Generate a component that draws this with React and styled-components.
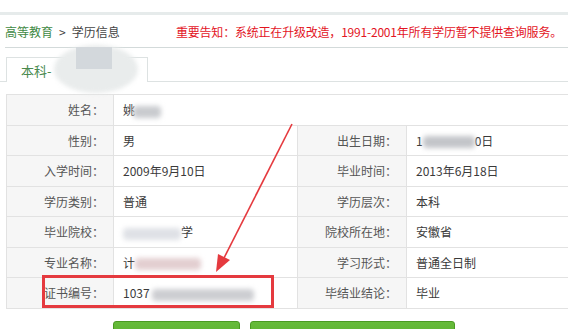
import React from 'react'
import styled, { createGlobalStyle } from 'styled-components'

const GlobalStyle = createGlobalStyle`
  html, body {
    margin: 0;
    padding: 0;
    background: #fff;
    overflow: hidden;
  }
  body {
    font-family: 'Noto Sans CJK SC', 'Noto Sans', sans-serif;
    font-size: 12px;
    color: #333;
  }
`

const Page = styled.div`
  position: relative;
  width: 568px;
  height: 329px;
  overflow: hidden;
`

const TopStrip = styled.div`
  height: 12px;
  border-bottom: 3px solid #e6ebeb;
`

const Crumbs = styled.div`
  display: flex;
  align-items: center;
  justify-content: space-between;
  height: 32px;
  margin-left: 5px;
  padding-right: 6px;
  border-bottom: 1px solid #d3dada;
  white-space: nowrap;
`

const Trail = styled.div`
  display: flex;
  gap: 6px;
  color: #444;
  font-size: 12px;
  a {
    color: #3f8a44;
    text-decoration: none;
  }
`

const Notice = styled.div`
  color: #e3151f;
  font-size: 12px;
  letter-spacing: -0.2px;
`

const TabBar = styled.div`
  display: flex;
  margin-top: 9px;
  padding-left: 6px;
  border-bottom: 1px solid #dde2e2;
`

const Tab = styled.div`
  width: 126px;
  height: 24px;
  padding-left: 14px;
  display: flex;
  align-items: center;
  color: #4a8a4e;
  font-size: 13px;
  border: 1px solid #dde2e2;
  border-bottom: none;
  background: #fff;
  margin-bottom: -1px;
`

const TableWrap = styled.div`
  position: relative;
  margin: 12px 0 0 6px;
`

const Table = styled.table`
  border-collapse: collapse;
  width: 600px;
  table-layout: fixed;
  td {
    border: 1px solid #e2e2e2;
    height: 29.5px;
    padding: 0;
    vertical-align: middle;
    white-space: nowrap;
  }
`

const Label = styled.td`
  background: #f6f6f6;
  text-align: right;
  padding-right: 9px !important;
  color: #555;
`

const Value = styled.td`
  background: #fff;
  padding-left: 9px !important;
  color: #3a3a3a;
`

const Blur = styled.span`
  display: inline-block;
  vertical-align: middle;
  width: ${p => p.w}px;
  height: ${p => p.h || 12}px;
  margin-left: ${p => p.ml || 0}px;
  background: ${p => p.c || '#c9cbcf'};
  border-radius: 4px;
  filter: blur(2.5px);
`

const Ellipse = styled.div`
  position: absolute;
  left: ${p => p.x}px;
  top: ${p => p.y}px;
  width: ${p => p.w}px;
  height: ${p => p.h}px;
  border-radius: 50%;
  background: ${p => p.c};
  filter: blur(${p => p.b || 2}px);
`

const Square = styled.div`
  position: absolute;
  left: 76px;
  top: 47px;
  width: 36px;
  height: 22px;
  background: #d3d8dc;
  filter: blur(0.5px);
`

const RedBox = styled.div`
  position: absolute;
  left: 36px;
  top: 181px;
  width: 226px;
  height: 27px;
  border: 3px solid #e53a3f;
`

const Arrow = styled.svg`
  position: absolute;
  left: 0;
  top: 0;
  pointer-events: none;
`

const Actions = styled.div`
  display: flex;
  align-items: flex-start;
  margin-top: 12px;
  padding-left: 113px;
  gap: 10px;
`

const GreenButton = styled.button`
  flex-shrink: 0;
  width: ${p => p.w}px;
  height: 30px;
  border: 1px solid #4a9a22;
  border-radius: 3px;
  background: linear-gradient(#66bb3a, #56a92c);
  color: #fff;
  font-family: inherit;
  font-size: 13px;
  padding: 0;
  line-height: 28px;
`

const HelpLink = styled.a`
  flex-shrink: 0;
  margin-left: 3px;
  margin-top: 7px;
  color: #1a5fd0;
  font-size: 12px;
  text-decoration: none;
  white-space: nowrap;
`

export default function App() {
  return (
    <Page>
      <GlobalStyle />
      <TopStrip />
      <Crumbs>
        <Trail>
          <a>高等教育</a>
          <span>&gt;</span>
          <span>学历信息</span>
        </Trail>
        <Notice>重要告知：系统正在升级改造，1991-2001年所有学历暂不提供查询服务。</Notice>
      </Crumbs>
      <TabBar>
        <Tab>本科-</Tab>
      </TabBar>
      <TableWrap>
        <Table>
          <colgroup>
            <col style={{ width: 107 }} />
            <col style={{ width: 184 }} />
            <col style={{ width: 109 }} />
            <col style={{ width: 200 }} />
          </colgroup>
          <tbody>
            <tr>
              <Label>姓名：</Label>
              <Value colSpan={3}>
                姚<Blur w={28} ml={-2} />
              </Value>
            </tr>
            <tr>
              <Label>性别：</Label>
              <Value>男</Value>
              <Label>出生日期：</Label>
              <Value>
                1<Blur w={52} c="#c3c5c9" />0日
              </Value>
            </tr>
            <tr>
              <Label>入学时间：</Label>
              <Value>2009年9月10日</Value>
              <Label>毕业时间：</Label>
              <Value>2013年6月18日</Value>
            </tr>
            <tr>
              <Label>学历类别：</Label>
              <Value>普通</Value>
              <Label>学历层次：</Label>
              <Value>本科</Value>
            </tr>
            <tr>
              <Label>毕业院校：</Label>
              <Value>
                <Blur w={58} c="#dfe1e6" />学
              </Value>
              <Label>院校所在地：</Label>
              <Value>安徽省</Value>
            </tr>
            <tr>
              <Label>专业名称：</Label>
              <Value>
                计<Blur w={66} c="#e3cfd1" />
              </Value>
              <Label>学习形式：</Label>
              <Value>普通全日制</Value>
            </tr>
            <tr>
              <Label>证书编号：</Label>
              <Value>
                1037 <Blur w={102} c="#cdced2" />
              </Value>
              <Label>毕结业结论：</Label>
              <Value>毕业</Value>
            </tr>
          </tbody>
        </Table>
        <RedBox />
      </TableWrap>
      <Ellipse x={54} y={45} w={84} h={48} c="#e9ecec" b={2} />
      <Square />
      <Arrow width="568" height="329" viewBox="0 0 568 329">
        <line x1="292" y1="124" x2="224" y2="258" stroke="#e53a3f" strokeWidth="1.6" />
        <polygon points="216,272 218,254 230,260" fill="#e53a3f" />
      </Arrow>
      <Actions>
        <GreenButton w={127}>打印学历信息</GreenButton>
        <GreenButton w={205}>申请认证学历电子注册备案表</GreenButton>
        <HelpLink>什么是学历电子注册备案</HelpLink>
      </Actions>
    </Page>
  )
}
